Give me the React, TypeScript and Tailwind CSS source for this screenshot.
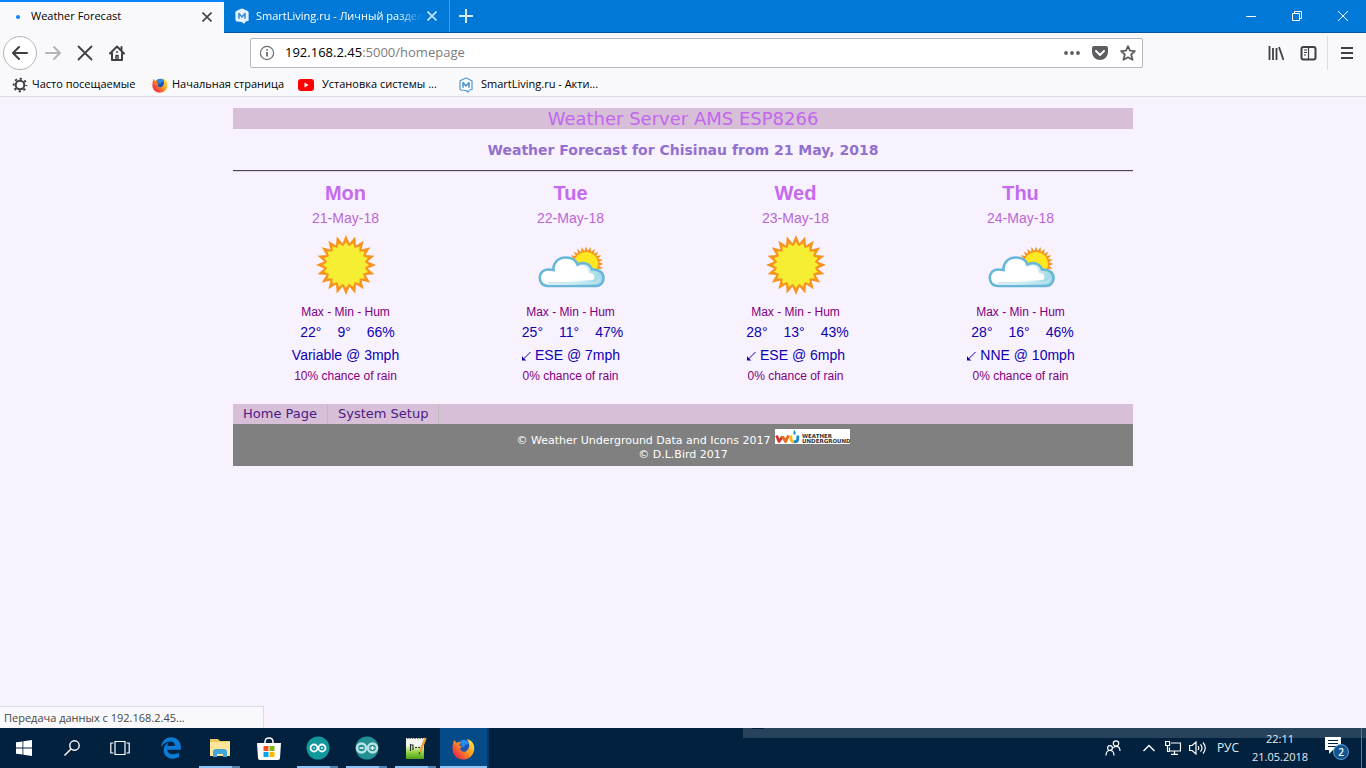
import type { ReactNode } from "react";
import { FaEdgeLegacy } from "react-icons/fa";

type Sky = "sun" | "cloud";

const DAYS: {
  day: string;
  date: string;
  sky: Sky;
  max: string;
  min: string;
  hum: string;
  wind: string;
  arrow: boolean;
  rain: string;
}[] = [
  { day: "Mon", date: "21-May-18", sky: "sun", max: "22°", min: "9°", hum: "66%", wind: "Variable @ 3mph", arrow: false, rain: "10% chance of rain" },
  { day: "Tue", date: "22-May-18", sky: "cloud", max: "25°", min: "11°", hum: "47%", wind: "ESE @ 7mph", arrow: true, rain: "0% chance of rain" },
  { day: "Wed", date: "23-May-18", sky: "sun", max: "28°", min: "13°", hum: "43%", wind: "ESE @ 6mph", arrow: true, rain: "0% chance of rain" },
  { day: "Thu", date: "24-May-18", sky: "cloud", max: "28°", min: "16°", hum: "46%", wind: "NNE @ 10mph", arrow: true, rain: "0% chance of rain" },
];

export default function App() {
  return (
    <div className="flex min-h-screen flex-col bg-[#f7f2fe] font-['Open_Sans','Noto_Sans',sans-serif]">
      <header className="border-b border-[#dcdce0] bg-[#f9f9fb]">
        <TabStrip />
        <Toolbar />
        <Bookmarks />
      </header>
      <div className="relative flex-1">
        <WeatherPage />
        <div className="absolute bottom-0 left-0 h-[22px] w-[264px] border-t border-r border-[#dcdce0] bg-[#f9f9fb] px-1 text-[11px] leading-[21px] whitespace-nowrap text-[#444]">
          Передача данных с 192.168.2.45...
        </div>
      </div>
      <Taskbar />
    </div>
  );
}

/* ---------- browser chrome ---------- */

function TabStrip() {
  return (
    <div className="flex h-[33px] bg-[#0078d7] text-[11px]">
      <div className="flex w-[224px] items-center border-t-2 border-[#0a84ff] bg-[#f9f9fb] pr-3 pb-[2px] pl-4 text-black">
        <span className="size-1 rounded-full bg-[#0a84ff]" />
        <span className="ml-[11px] flex-1 whitespace-nowrap">Weather Forecast</span>
        <button aria-label="Закрыть вкладку" className="text-[#444]">
          <Cross />
        </button>
      </div>
      <div className="flex flex-1 border-b border-[#0a5391] text-white">
        <div className="flex w-[226px] items-center border-r border-[#4a9fe3] pr-3 pl-2.5">
          <MajorIcon className="size-4 text-[#e4f2ff]" filled />
          <span className="ml-1.5 flex-1 overflow-hidden [mask-image:linear-gradient(to_right,black_85%,transparent)] whitespace-nowrap">
            SmartLiving.ru - Личный раздел
          </span>
          <button aria-label="Закрыть вкладку" className="ml-1 text-[#cbe4f7]">
            <Cross />
          </button>
        </div>
        <button aria-label="Новая вкладка" className="w-8 pl-2">
          <svg className="size-4" viewBox="0 0 16 16" stroke="#d5eaf9" strokeWidth="2">
            <path d="M8 1v14M1 8h14" />
          </svg>
        </button>
        <div className="flex-1" />
        <WindowButton label="Свернуть">
          <path d="M0 5.500h10" />
        </WindowButton>
        <WindowButton label="Восстановить">
          <path d="M.5 2.500h7v7h-7zM2.500 2.500v-2h7v7h-2" />
        </WindowButton>
        <WindowButton label="Закрыть">
          <path d="M0 0l10 10M10 0L0 10" />
        </WindowButton>
      </div>
    </div>
  );
}

function WindowButton({ label, children }: { label: string; children: ReactNode }) {
  return (
    <button aria-label={label} className="flex w-[46px] items-center justify-center">
      <svg className="size-[10px] overflow-visible" viewBox="0 0 10 10" fill="none" stroke="white">
        {children}
      </svg>
    </button>
  );
}

function Toolbar() {
  return (
    <div className="flex h-10 items-center text-[#3f3f44]">
      <nav className="flex w-[250px] items-center pl-[3px]">
        <button aria-label="Назад" className="flex size-[34px] items-center justify-center rounded-full border border-[#b5b5b8] bg-white">
          <ArrowIcon />
        </button>
        <button aria-label="Вперёд" className="flex w-8 justify-center text-[#b5b5b8]">
          <span className="-scale-x-100">
            <ArrowIcon />
          </span>
        </button>
        <button aria-label="Остановить" className="flex w-8 justify-center">
          <svg className="size-4" viewBox="0 0 16 16" stroke="currentColor" strokeWidth="1.800" strokeLinecap="round">
            <path d="M1.500 1.500l13 13M14.500 1.500l-13 13" />
          </svg>
        </button>
        <button aria-label="Домой" className="flex w-8 justify-center">
          <svg className="size-4" viewBox="0 0 16 16" fill="none" stroke="currentColor" strokeWidth="2" strokeLinecap="round" strokeLinejoin="round">
            <path d="M1 8.500L8 1.500l7 7M3 8v7h10V8" />
            <path d="M12.500 2v2.500" />
            <path d="M7 15v-4.500h2V15" strokeWidth="1.500" />
            <path d="M7.500 7h1" strokeWidth="1.500" />
          </svg>
        </button>
      </nav>
      <div className="flex h-[30px] flex-1 items-center rounded-xs border border-[#b8b8bc] bg-white pr-1.5 pl-2 text-[13px]">
        <svg className="size-4" viewBox="0 0 16 16" fill="none" stroke="#707074" strokeWidth="1.200">
          <circle cx="8" cy="8" r="6.600" />
          <path d="M8 7v4.500M8 4.200v1.600" strokeWidth="1.800" />
        </svg>
        <label htmlFor="address" className="ml-[10px] text-black">
          192.168.2.45
        </label>
        <input id="address" defaultValue=":5000/homepage" className="min-w-0 flex-1 text-[#7b7b7e] outline-none" />
        <div className="flex items-center gap-3 text-[#5d5d61]">
          <button aria-label="Действия на странице">
            <svg className="size-4" viewBox="0 0 16 16" fill="currentColor">
              <circle cx="2" cy="8" r="1.900" />
              <circle cx="8" cy="8" r="1.900" />
              <circle cx="14" cy="8" r="1.900" />
            </svg>
          </button>
          <button aria-label="Сохранить в Pocket">
            <svg className="size-4" viewBox="0 0 16 16">
              <path d="M2 1h12a2 2 0 0 1 2 2v4a8 8 0 0 1-16 0V3a2 2 0 0 1 2-2z" fill="currentColor" />
              <path d="M4 6l4 4 4-4" fill="none" stroke="white" strokeWidth="2" strokeLinecap="round" strokeLinejoin="round" />
            </svg>
          </button>
          <button aria-label="Добавить в закладки">
            <svg className="size-4" viewBox="0 0 16 16" fill="none" stroke="currentColor" strokeWidth="1.800" strokeLinejoin="round">
              <path d="M8 1.200l2 4.500 4.900.5-3.700 3.300 1.300 5.300L8 12.300l-4.500 2.500 1.300-5.300L1.100 6.200 6 5.700z" />
            </svg>
          </button>
        </div>
      </div>
      <div className="flex h-full w-[223px] items-center justify-end">
        <button aria-label="Библиотека" className="mr-4">
          <svg className="size-4" viewBox="0 0 16 16" stroke="currentColor" strokeWidth="1.800">
            <path d="M1.500 1v14M5 3v12M8.500 3v12M11 2l4.500 13" />
          </svg>
        </button>
        <button aria-label="Боковая панель" className="mr-[10px]">
          <svg className="size-[17px]" viewBox="0 0 17 17" fill="none" stroke="currentColor" strokeWidth="2">
            <rect x="1.500" y="2" width="14" height="12.500" rx="2" />
            <path d="M8.500 2v12" strokeWidth="1.200" />
            <path d="M4 5h3M4 7.500h3M4 10h2" strokeWidth="1" />
          </svg>
        </button>
        <button aria-label="Открыть меню" className="h-[34px] w-[39px] border-l border-[#dcdce0] pl-[13px]">
          <svg className="size-3" viewBox="0 0 12 12" stroke="currentColor" strokeWidth="2">
            <path d="M0 1h12M0 6h12M0 11h12" />
          </svg>
        </button>
      </div>
    </div>
  );
}

function Bookmarks() {
  return (
    <nav className="flex h-[23px] items-center pl-3 text-[11px] whitespace-nowrap text-black">
      <a href="#often" className="flex w-[140px] items-center gap-1">
        <svg className="size-4" viewBox="0 0 16 16" fill="none" stroke="#3f3f44">
          <circle cx="8" cy="8" r="4.300" strokeWidth="2" />
          <circle cx="8" cy="8" r="6.300" strokeWidth="2" strokeDasharray="2.200 2.748" strokeDashoffset="1.100" />
        </svg>
        Часто посещаемые
      </a>
      <a href="#start" className="flex w-[146px] items-center gap-1">
        <FirefoxIcon className="size-4" />
        Начальная страница
      </a>
      <a href="#video" className="flex w-[160px] items-center gap-2">
        <svg className="size-4" viewBox="0 0 16 16">
          <rect x="0" y="2" width="16" height="12" rx="3" fill="#f00" />
          <path d="M6.500 5.500l4 2.500-4 2.500z" fill="white" />
        </svg>
        Установка системы ...
      </a>
      <a href="#smart" className="flex items-center gap-[7px]">
        <MajorIcon className="size-4 text-[#4f95cd]" />
        SmartLiving.ru - Акти...
      </a>
    </nav>
  );
}

function Cross() {
  return (
    <svg className="size-[10px]" viewBox="0 0 10 10" stroke="currentColor" strokeWidth="1.600">
      <path d="M.5.5l9 9M9.500.5l-9 9" />
    </svg>
  );
}

function ArrowIcon() {
  return (
    <svg className="size-4" viewBox="0 0 16 16" fill="none" stroke="currentColor" strokeWidth="2" strokeLinecap="round" strokeLinejoin="round">
      <path d="M15 8H1.500M7 2L1 8l6 6" />
    </svg>
  );
}

function MajorIcon({ className, filled = false }: { className: string; filled?: boolean }) {
  return (
    <svg className={className} viewBox="0 0 16 16" fill="none" stroke="currentColor" strokeLinejoin="round">
      <path
        d="M4.500 2.500L8 1l3.500 1.500L14 4v8.500L11.500 13l-1.500 2-2-1.500-5-.5-1-1V4z"
        fill={filled ? "currentColor" : "white"}
        strokeWidth="1.200"
      />
      <path d="M5 10.800V5.500l3 3.500 3-3.500v5.300" stroke={filled ? "#3b8fd6" : "currentColor"} strokeWidth="1.600" />
    </svg>
  );
}

function FirefoxIcon({ className }: { className: string }) {
  return (
    <svg className={className} viewBox="0 0 24 24">
      <defs>
        <linearGradient id="fox" x1="0.900" y1="0.100" x2="0.100" y2="0.800">
          <stop offset="0" stopColor="#ffe84a" />
          <stop offset="0.450" stopColor="#ff9a1c" />
          <stop offset="1" stopColor="#ee2a48" />
        </linearGradient>
      </defs>
      <circle cx="12.500" cy="11" r="8.500" fill="#1b55b4" />
      <path d="M9 4c3-2 8-1 9 3l-4 1-2 3-3-3z" fill="#2a8be8" />
      <path
        d="M2 3c1 .5 2 1.500 2.500 3C6 5 8 5 9.500 5.500 8 6.500 7.500 8 8 9.500l2.500.5-2 2c0 3 4 4.500 6.500 2.500 4-3 4-8 .5-12.500C22 3.500 24 9 23 14c-1.200 6-6 9.500-11.500 9.500C5 23.500.500 18.500.500 12.500.500 9 1 6 2 3z"
        fill="url(#fox)"
      />
    </svg>
  );
}

/* ---------- weather page ---------- */

function WeatherPage() {
  return (
    <main className="mx-auto max-w-[900px] pt-[11px] font-['DejaVu_Sans',Verdana,sans-serif]">
      <h1 className="bg-[#d8bfd8] text-center text-[18px] leading-[21px] text-[#c167ee]">
        Weather Server AMS ESP8266
      </h1>
      <h2 className="pt-2 pb-[7px] text-center text-[14px] leading-[26px] font-bold text-[#9370cf]">
        Weather Forecast for Chisinau from 21 May, 2018
      </h2>
      <hr className="h-[2px] border-t border-b border-t-[#4a4550] border-b-[#ddd5e3]" />
      <table className="mt-2 mb-5 w-full table-fixed text-center font-['Liberation_Sans',Arial,sans-serif]">
        <thead>
          <tr className="h-[26px] text-[20px] leading-[26px] text-[#c46bf0]">
            {DAYS.map((d) => (
              <th key={d.day}>{d.day}</th>
            ))}
          </tr>
        </thead>
        <tbody>
          <tr className="text-[14px] leading-6 text-[#bb66d8]">
            {DAYS.map((d) => (
              <td key={d.day}>{d.date}</td>
            ))}
          </tr>
          <tr className="h-[72px]">
            {DAYS.map((d) => (
              <td key={d.day} className="pb-[2px]">
                <div className="flex justify-center">{d.sky === "sun" ? <SunIcon /> : <CloudIcon />}</div>
              </td>
            ))}
          </tr>
          <tr className="text-[12px] leading-5 text-[#800080]">
            {DAYS.map((d) => (
              <td key={d.day}>Max - Min - Hum</td>
            ))}
          </tr>
          <tr className="text-[14px] leading-5 text-[#1000b4]">
            {DAYS.map((d) => (
              <td key={d.day}>
                <div className="flex justify-center gap-4 pl-1">
                  <span>{d.max}</span>
                  <span>{d.min}</span>
                  <span>{d.hum}</span>
                </div>
              </td>
            ))}
          </tr>
          <tr className="text-[14px] leading-[26px] text-[#1000b4]">
            {DAYS.map((d) => (
              <td key={d.day}>
                <div className="flex items-center justify-center gap-1">
                  {d.arrow && <WindArrow />}
                  {d.wind}
                </div>
              </td>
            ))}
          </tr>
          <tr className="text-[12px] leading-4 text-[#800080]">
            {DAYS.map((d) => (
              <td key={d.day}>{d.rain}</td>
            ))}
          </tr>
        </tbody>
      </table>
      <nav className="flex bg-[#d8bfd8] text-[13px] leading-5 text-[#4b1a84]">
        <a href="#home" className="border-r border-[#bbb] px-[10px]">
          Home Page
        </a>
        <a href="#setup" className="border-r border-[#bbb] px-[10px]">
          System Setup
        </a>
      </nav>
      <footer className="bg-[#808080] pt-[5px] pb-1 text-[11px] text-white">
        <p className="flex justify-center gap-1">
          <span className="pt-1 leading-[15px]">© Weather Underground Data and Icons 2017</span>
          <WundergroundLogo />
        </p>
        <p className="text-center leading-[14px]">© D.L.Bird 2017</p>
      </footer>
    </main>
  );
}

function burst(cx: number, cy: number, outer: number, inner: number, spikes: number) {
  const points: string[] = [];
  for (let i = 0; i < spikes * 2; i++) {
    const r = i % 2 === 0 ? outer : inner;
    const a = (Math.PI * i) / spikes - Math.PI / 2;
    points.push(`${(cx + r * Math.cos(a)).toFixed(2)},${(cy + r * Math.sin(a)).toFixed(2)}`);
  }
  return points.join(" ");
}

function SunIcon() {
  return (
    <svg className="h-[60px] w-[60px]" viewBox="0 0 60 60">
      <polygon points={burst(30, 30, 30, 22, 20)} fill="#f7941e" />
      <polygon points={burst(30, 30, 23, 19, 20)} fill="#f6ee32" />
    </svg>
  );
}

function CloudIcon() {
  return (
    <svg className="h-[60px] w-[70px]" viewBox="0 0 70 60">
      <defs>
        <linearGradient id="mist" x1="0" y1="0" x2="1" y2="0.200">
          <stop offset="0.550" stopColor="#fff" />
          <stop offset="1" stopColor="#a5dbe5" />
        </linearGradient>
      </defs>
      <polygon points={burst(50, 29, 17.500, 13, 24)} fill="#f7941e" />
      <circle cx="50" cy="29" r="12" fill="#fde71f" />
      <path
        d="M12 51C6 51 3.800 47 3.800 42.500 3.800 38 7 34.500 12 34.500c2 0 3.500 0 5.500.5C17 28 22 22.500 30 22.500c6 0 10 3 11.500 7C47 26.500 54 28.500 56 34.500c6-.5 11.500 2.500 11.500 8.500 0 5-3.500 8-7.500 8z"
        fill="url(#mist)"
        stroke="#68b6d8"
        strokeWidth="2.600"
      />
      <path d="M12 48h45c4 0 6-2 7-4.500" fill="none" stroke="#bfe6ee" strokeWidth="1.500" />
      <path d="M9 45C5 40 9 36 19 38c0-8 5-13 11-13 5 0 8 3 10 8 6-4 12-2 13 5 5 0 7 4 4 7-12 1-36 1-48 0z" fill="#fff" />
    </svg>
  );
}

function WindArrow() {
  return (
    <svg className="mt-1 size-[10px]" viewBox="0 0 10 10" fill="none" stroke="currentColor">
      <path d="M9.500 0L2.500 7" />
      <path d="M1 4v4.500h4.500L3.500 7 2.500 6z" fill="currentColor" stroke="none" />
    </svg>
  );
}

function WundergroundLogo() {
  return (
    <svg className="h-[15px] w-[75px]" viewBox="0 0 75 15" role="img" aria-label="Weather Underground">
      <rect width="75" height="15" fill="white" />
      <g fill="none" strokeWidth="2.800" strokeLinejoin="round">
        <path d="M1.500 6.500l2.500 6 3.500-5" stroke="#d8352a" />
        <path d="M7.500 7.500l3 5 3-6" stroke="#ee6a24" />
        <path d="M16 6.500V10q0 2.800 3.500 2.800" stroke="#f5b81c" />
        <path d="M19 12.800q3.800 0 3.800-2.800V6.500" stroke="#1787c8" />
      </g>
      <path d="M19.500 1q2.500 3.500 0 5-2.500-1.500 0-5z" fill="#1ba0a8" />
      <text x="27" y="8.500" fontFamily="DejaVu Sans" fontSize="5.500" fontWeight="700" fill="#333">
        WEATHER
      </text>
      <text x="27" y="14" fontFamily="DejaVu Sans" fontSize="5.500" fontWeight="700" fill="#333">
        UNDERGROUND
      </text>
    </svg>
  );
}

/* ---------- taskbar ---------- */

function Taskbar() {
  return (
    <footer className="relative flex h-10 bg-[#01213e] text-[11px] text-[#e6ebf0]">
      <div className="absolute top-0 right-0 h-[10px] w-[623px] bg-[#27435c]" />
      <div className="absolute top-0 right-[602px] h-[1px] w-3 bg-[#01213e]" />
      <button aria-label="Пуск" className="flex w-12 items-center justify-center">
        <svg className="size-4" viewBox="0 0 16 16" fill="white">
          <path d="M0 2.300L6.500 1.400v6.200H0zM7.300 1.300L16 0v7.600H7.300zM0 8.400h6.500v6.200L0 13.700zM7.300 8.400H16V16l-8.700-1.300z" />
        </svg>
      </button>
      <button aria-label="Поиск" className="flex w-12 items-center justify-center">
        <svg className="size-4" viewBox="0 0 16 16" fill="none" stroke="white" strokeWidth="1.400">
          <circle cx="10.500" cy="5.500" r="4.700" />
          <path d="M7 9L.5 15.500" />
        </svg>
      </button>
      <button aria-label="Представление задач" className="mr-[2px] flex w-12 items-center justify-center">
        <svg className="h-4 w-5" viewBox="0 0 20 16" fill="none" stroke="white" strokeWidth="1.200">
          <path d="M5 1.500h10v13H5zM3.500 3H.8v10h2.700M16.500 3h2.700v10h-2.700" />
        </svg>
      </button>
      <TaskButton label="Microsoft Edge">
        <FaEdgeLegacy className="size-[22px] text-[#0a7bd6]" />
      </TaskButton>
      <TaskButton label="Проводник" open>
        <svg className="h-5 w-[22px]" viewBox="0 0 22 20">
          <path d="M1 1h8l2 2h10v15H1z" fill="#f0c75e" />
          <path d="M1 4h20v14H1z" fill="#fde59a" />
          <path d="M4 19v-5q0-3 3-3h8q3 0 3 3v5h-4v-3H8v3z" fill="#42a6d9" />
        </svg>
      </TaskButton>
      <TaskButton label="Магазин">
        <svg className="h-[23px] w-6" viewBox="0 0 24 23">
          <path d="M8 7V5q0-4 4-4t4 4v2" fill="none" stroke="white" strokeWidth="1.500" />
          <path d="M0 6h24l-1 15q0 2-2 2H3q-2 0-2-2z" fill="white" />
          <path d="M6.500 9h5v5h-5z" fill="#f25022" />
          <path d="M12.500 9h5v5h-5z" fill="#7fba00" />
          <path d="M6.500 15h5v5h-5z" fill="#00a4ef" />
          <path d="M12.500 15h5v5h-5z" fill="#ffb900" />
        </svg>
      </TaskButton>
      <TaskButton label="Arduino" open>
        <ArduinoIcon />
      </TaskButton>
      <TaskButton label="Arduino IDE" open>
        <ArduinoIcon large />
      </TaskButton>
      <TaskButton label="Notepad++" open>
        <svg className="h-6 w-[22px]" viewBox="0 0 22 24">
          <defs>
            <linearGradient id="page" x1="0" y1="0" x2="0" y2="1">
              <stop offset="0.350" stopColor="#f4f7ef" />
              <stop offset="0.650" stopColor="#9ad84a" />
              <stop offset="1" stopColor="#4fa01a" />
            </linearGradient>
          </defs>
          <path d="M1 2h18v21H1z" fill="url(#page)" />
          <path d="M2 2.500h16" stroke="#777" strokeDasharray="1.500 1" />
          <path d="M5.500 8v7M5.500 9h2.500v5M10 11.500h2M13 11.500h2" fill="none" stroke="#333" strokeWidth="1.200" />
          <path d="M20.500 2L15 16" stroke="#e8a33a" strokeWidth="2.500" />
          <path d="M14.800 16l-.8 2.500" stroke="#333" />
        </svg>
      </TaskButton>
      <TaskButton label="Firefox" active>
        <FirefoxIcon className="size-[23px]" />
      </TaskButton>
      <div className="relative ml-auto flex items-center">
        <button aria-label="Люди">
          <svg className="size-4" viewBox="0 0 16 16" fill="none" stroke="white" strokeWidth="1.200">
            <circle cx="11" cy="3.500" r="2.700" />
            <circle cx="5" cy="8" r="2.400" />
            <path d="M1 15.500q0-5 4-5t4 5M8.500 8q1-1.700 2.500-1.700 4 0 4 4.700" />
          </svg>
        </button>
        <button aria-label="Скрытые значки" className="ml-[22px]">
          <svg className="h-2 w-3" viewBox="0 0 12 8" fill="none" stroke="white" strokeWidth="1.400">
            <path d="M.5 7L6 1.500 11.500 7" />
          </svg>
        </button>
        <button aria-label="Сеть" className="ml-[10px]">
          <svg className="size-4" viewBox="0 0 16 16" fill="none" stroke="white" strokeWidth="1.200">
            <path d="M6 3h9.500v8H4.500V7.500M9.500 11v3M6 14.400h7M.6 1.500h4v4h-4zM2.500 5.500v6H4.500" />
          </svg>
        </button>
        <button aria-label="Громкость" className="ml-2">
          <svg className="h-4 w-[17px]" viewBox="0 0 17 16" fill="none" stroke="white" strokeWidth="1.200">
            <path d="M.6 5.500h2.500L7 2v12l-3.900-3.500H.6zM9 6q1.500 2 0 4M11.500 4.300q3 3.700 0 7.400M14 2.500q4.500 5.500 0 11" />
          </svg>
        </button>
        <button className="ml-[10px] w-6 text-[12px]">РУС</button>
        <time className="ml-2 w-16 text-center leading-[18px]">
          22:11
          <br />
          21.05.2018
        </time>
        <button aria-label="Уведомления" className="relative mr-3 ml-3 h-6 w-[25px]">
          <svg className="size-full" viewBox="0 0 25 24">
            <path d="M1 1h16v13H9l-4 4v-4H1z" fill="white" />
            <path d="M4 4.500h10M4 7.500h10M4 10.500h8" stroke="#01213e" />
          </svg>
          <span className="absolute right-0 bottom-0 size-4 rounded-full border border-[#5ba0d8] bg-[#14558f] text-[10px] leading-[14px] font-semibold text-white">
            2
          </span>
        </button>
        <span className="mr-1 h-10 w-[1px] bg-[#5d7489]" />
      </div>
    </footer>
  );
}

function TaskButton({
  label,
  open = false,
  active = false,
  children,
}: {
  label: string;
  open?: boolean;
  active?: boolean;
  children: ReactNode;
}) {
  return (
    <button
      aria-label={label}
      className={`relative flex w-[49px] items-center justify-center ${active ? "border-r-2 border-[#053a6b] bg-[#044b87]" : ""}`}
    >
      {children}
      {open && (
        <span className="absolute inset-x-1 bottom-0 flex h-[2px]">
          <span className="flex-1 bg-[#8cc4f5]" />
          <span className="w-2 bg-[#5683ac]" />
        </span>
      )}
      {active && <span className="absolute inset-x-0 bottom-0 h-[2px] bg-[#8cc4f5]" />}
    </button>
  );
}

function ArduinoIcon({ large = false }: { large?: boolean }) {
  return (
    <svg className="size-6" viewBox="0 0 24 24" fill="none">
      <circle cx="12" cy="12" r="11.500" fill={large ? "#218f94" : "#12979c"} />
      <g stroke={large ? "#b9e3e4" : "white"} strokeWidth={large ? 2.400 : 1.800}>
        <circle cx={large ? 6.500 : 8} cy="12" r={large ? 4.500 : 3.500} />
        <circle cx={large ? 17.500 : 16} cy="12" r={large ? 4.500 : 3.500} />
      </g>
      <path d={large ? "M4.500 12h4M15.500 12h4M17.500 10v4" : "M7 12h2M15 12h2M16 11v2"} stroke="white" strokeWidth={large ? 1.400 : 0.800} />
    </svg>
  );
}
